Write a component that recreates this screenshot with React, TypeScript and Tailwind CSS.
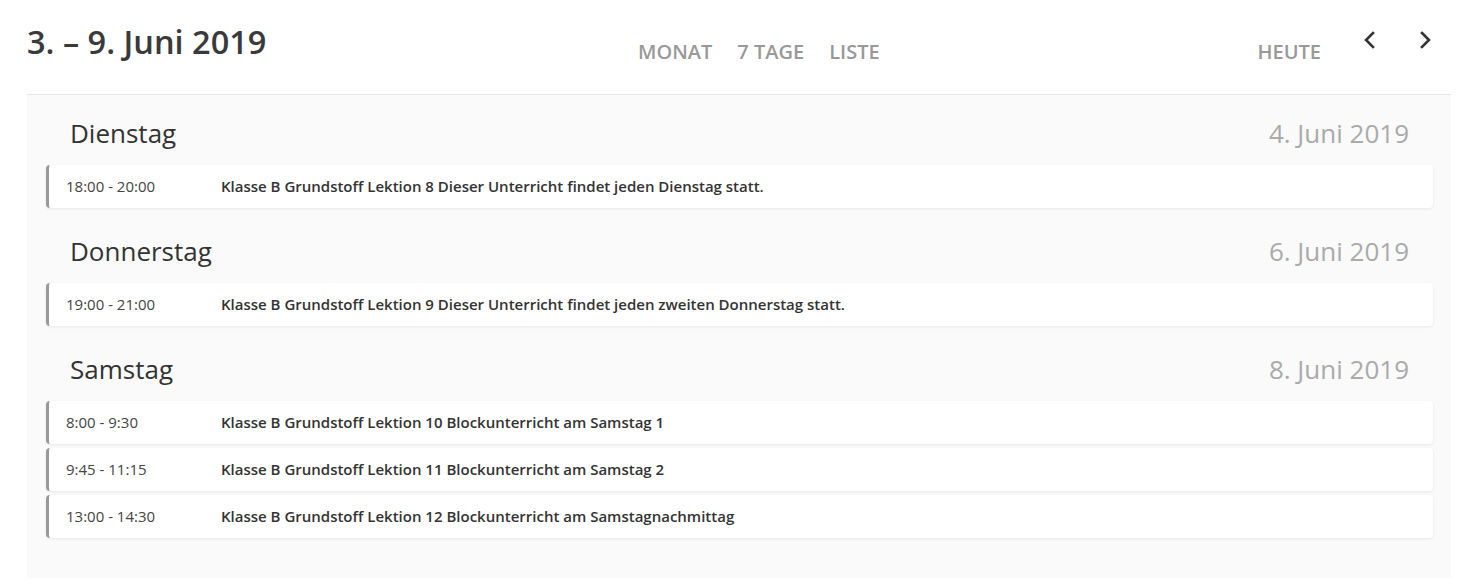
const font = { fontFamily: '"Open Sans", "Noto Sans", sans-serif' };

type Entry = { time: string; title: string };
type Day = { name: string; date: string; entries: Entry[] };

const days: Day[] = [
  {
    name: "Dienstag",
    date: "4. Juni 2019",
    entries: [
      {
        time: "18:00 - 20:00",
        title: "Klasse B Grundstoff Lektion 8 Dieser Unterricht findet jeden Dienstag statt.",
      },
    ],
  },
  {
    name: "Donnerstag",
    date: "6. Juni 2019",
    entries: [
      {
        time: "19:00 - 21:00",
        title: "Klasse B Grundstoff Lektion 9 Dieser Unterricht findet jeden zweiten Donnerstag statt.",
      },
    ],
  },
  {
    name: "Samstag",
    date: "8. Juni 2019",
    entries: [
      { time: "8:00 - 9:30", title: "Klasse B Grundstoff Lektion 10 Blockunterricht am Samstag 1" },
      { time: "9:45 - 11:15", title: "Klasse B Grundstoff Lektion 11 Blockunterricht am Samstag 2" },
      { time: "13:00 - 14:30", title: "Klasse B Grundstoff Lektion 12 Blockunterricht am Samstagnachmittag" },
    ],
  },
];

function Chevron({ dir }: { dir: "left" | "right" }) {
  return (
    <svg width="14" height="18" viewBox="0 0 14 18" fill="none">
      <path
        d={dir === "left" ? "M10 2 L3 9 L10 16" : "M4 2 L11 9 L4 16"}
        stroke="#333"
        strokeWidth="2.6"
        strokeLinecap="square"
      />
    </svg>
  );
}

export default function App() {
  return (
    <div className="min-h-[584px] bg-white pl-[27px] pr-[22px]" style={font}>
      {/* Header */}
      <div className="flex h-[95px] border-b border-[#e8e8e8]">
        <h1 className="w-[611px] pt-[20px] text-[32.5px] font-semibold leading-[44px] text-[#3a3a3a]">
          3. – 9. Juni 2019
        </h1>
        <nav className="flex gap-[25px] pt-[38px] text-[20px] font-semibold leading-[28px] text-[#999]">
          <span>MONAT</span>
          <span>7 TAGE</span>
          <span>LISTE</span>
        </nav>
        <div className="ml-auto flex pr-[19px]">
          <span className="pt-[38px] text-[20px] font-semibold leading-[28px] text-[#999]">HEUTE</span>
          <div className="ml-[42px] flex gap-[41px] pt-[31px]">
            <Chevron dir="left" />
            <Chevron dir="right" />
          </div>
        </div>
      </div>

      {/* List */}
      <div className="bg-[#fafafa] px-[18px] pb-[17px] pl-[19px] pt-[18px]">
        {days.map((day) => (
          <div key={day.name} className="mb-[23px]">
            <div className="flex h-[40px] items-center justify-between px-[24px] text-[26px] leading-[40px]">
              <span className="text-[#333]">{day.name}</span>
              <span className="text-[#aaa]">{day.date}</span>
            </div>
            <div className="mt-[12px] flex flex-col gap-[4px]">
              {day.entries.map((e) => (
                <div
                  key={e.time}
                  className="flex h-[43px] items-center rounded-[4px] border-l-[3px] border-[#999] bg-white pl-[17px] text-[15px] shadow-[0_1px_3px_rgba(0,0,0,0.08)]"
                >
                  <span className="w-[155px] text-[#444]">{e.time}</span>
                  <span className="font-semibold text-[#333]">{e.title}</span>
                </div>
              ))}
            </div>
          </div>
        ))}
      </div>
    </div>
  );
}
